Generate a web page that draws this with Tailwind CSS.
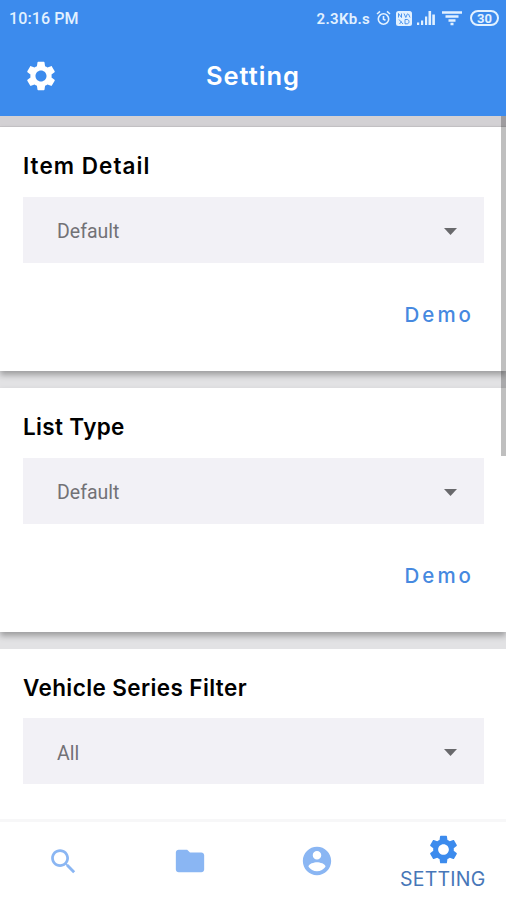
<!DOCTYPE html>
<html lang="en">
<head>
  <meta charset="UTF-8" />
  <title>Setting</title>
  <script src="https://cdn.jsdelivr.net/npm/@tailwindcss/browser@4"></script>
  <meta name="viewport" content="width=device-width, initial-scale=1.0" />
</head>
<body class="bg-white">

  <!-- icon shapes shared by the header and the tab bar -->
  <svg class="hidden">
    <symbol id="gear" viewBox="0 0 24 24">
      <path d="M19.43 12.98c.04-.32.07-.64.07-.98s-.03-.66-.07-.98l2.11-1.65c.19-.15.24-.42.12-.64l-2-3.46c-.12-.22-.39-.3-.61-.22l-2.49 1c-.52-.4-1.08-.73-1.69-.98l-.38-2.65C14.46 2.18 14.25 2 14 2h-4c-.25 0-.46.18-.49.42l-.38 2.65c-.61.25-1.17.59-1.69.98l-2.49-1c-.23-.09-.49 0-.61.22l-2 3.46c-.13.22-.07.49.12.64l2.11 1.65c-.04.32-.07.65-.07.98s.03.66.07.98l-2.11 1.65c-.19.15-.24.42-.12.64l2 3.46c.12.22.39.3.61.22l2.49-1c.52.4 1.08.73 1.69.98l.38 2.65c.03.24.24.42.49.42h4c.25 0 .46-.18.49-.42l.38-2.65c.61-.25 1.17-.59 1.69-.98l2.49 1c.23.09.49 0 .61-.22l2-3.46c.12-.22.07-.49-.12-.64l-2.11-1.65zM12 15.9c-2.150 0-3.900-1.750-3.900-3.900s1.750-3.900 3.900-3.900 3.900 1.750 3.900 3.900-1.750 3.900-3.900 3.900z" />
    </symbol>
  </svg>

  <div class="relative w-[506px] h-[900px] overflow-hidden flex flex-col font-['Inter',sans-serif]">

    <header class="h-[116px] shrink-0 bg-[#3c8bed] text-white">
      <div class="h-[38px] pl-[9px] pr-[7px] flex items-center justify-between font-['Roboto',sans-serif] font-medium text-[#e2f1ff]">
        <span class="text-[16px] tracking-[0.1px]">10:16 PM</span>
        <div class="flex items-center">
          <span class="text-[15px] font-semibold tracking-[0.3px] mr-[6px]">2.3Kb.s</span>
          <svg class="w-[15px] h-[16px] mr-[5px] -mt-[2px]" viewBox="0 0 15 16" fill="none" stroke="currentColor" stroke-width="1.6">
            <circle cx="7.5" cy="9" r="5.2" />
            <path d="M7.5 6v3.2l2 1M1 4l3-2.6M14 4l-3-2.6" />
          </svg>
          <svg class="w-[16px] h-[15px] mr-[5px] -mt-[1px]" viewBox="0 0 16 15">
            <rect width="16" height="15" rx="2.5" fill="currentColor" />
            <path d="M2.5 6.5v-4l3 4v-4M8 2.5l1.8 4 1.8-4M3 8.5l4 4.5M3.5 13l2-2.5M9 8.5v4.3h2.2c2.4 0 2.4-4.3 0-4.3zM12.5 3l1.5 3.5" fill="none" stroke="#3c8bed" stroke-width="0.9" />
          </svg>
          <svg class="w-[18px] h-[14px] mr-[7px] -mt-[3px]" viewBox="0 0 18 14" fill="currentColor">
            <path d="M0 11.500h2.200V14H0zM4 9.500h2.200V14H4zM8 5.500h2.200V14H8zM11.500 0h2.600v14h-2.600zM15.300 3.500h2.600V14h-2.600z" />
          </svg>
          <svg class="w-[20px] h-[15px] mr-[8px] -mt-[1px]" viewBox="0 0 20 15" fill="none" stroke="currentColor" stroke-width="2.400">
            <path d="M0 1.500h20M3.500 5.500h13M6.500 9.500h7M8.500 13h3" />
          </svg>
          <div class="w-[29px] h-[16px] -mt-[2px] rounded-full border-2 border-current flex items-center justify-center text-[13px] leading-none font-bold">30</div>
        </div>
      </div>

      <div class="h-[76px] grid grid-cols-3 items-center">
        <svg class="w-[34px] h-[34px] ml-[23.500px]" fill="currentColor"><use href="#gear" /></svg>
        <h1 class="text-center text-[25.500px] font-semibold tracking-[1px] whitespace-nowrap">Setting</h1>
      </div>
    </header>

    <main class="flex-1 min-h-0 overflow-hidden bg-[#e2e2e4] flex flex-col">
      <div class="h-[11px] shrink-0 bg-[#d3d1d4] border-b border-[#c6c4c7]"></div>

      <section class="relative h-[244px] mb-[17px] shrink-0 bg-white shadow-[0_4px_6px_rgba(0,0,0,0.3)] px-[23px] pt-[22px]">
        <h2 class="h-[32px] leading-[33px] text-[22.500px] font-semibold text-black tracking-[1.050px]">Item Detail</h2>
        <div class="mt-[16px] w-[461px] h-[66px] bg-[#f2f1f6] pl-[34px] pr-[27px] flex items-center justify-between">
          <span class="font-['Roboto',sans-serif] text-[19.500px] text-[#727276] pt-[4px]">Default</span>
          <svg class="w-[13px] h-[7px] mt-[2px]" viewBox="0 0 13 7" fill="#69696c"><path d="M0 0h13L6.500 7z" /></svg>
        </div>
        <div class="w-[451px] h-[105px] flex items-center justify-end text-[20.500px] font-medium tracking-[3px] text-[#4689e0]">Demo</div>
      </section>

      <section class="relative h-[244px] mb-[17px] shrink-0 bg-white shadow-[0_4px_6px_rgba(0,0,0,0.3)] px-[23px] pt-[22px]">
        <h2 class="h-[32px] leading-[33px] text-[22.500px] font-semibold text-black tracking-[0.350px]">List Type</h2>
        <div class="mt-[16px] w-[461px] h-[66px] bg-[#f2f1f6] pl-[34px] pr-[27px] flex items-center justify-between">
          <span class="font-['Roboto',sans-serif] text-[19.500px] text-[#727276] pt-[4px]">Default</span>
          <svg class="w-[13px] h-[7px] mt-[2px]" viewBox="0 0 13 7" fill="#69696c"><path d="M0 0h13L6.500 7z" /></svg>
        </div>
        <div class="w-[451px] h-[105px] flex items-center justify-end text-[20.500px] font-medium tracking-[3px] text-[#4689e0]">Demo</div>
      </section>

      <section class="relative h-[244px] shrink-0 bg-white px-[23px] pt-[22px]">
        <h2 class="h-[32px] leading-[33px] text-[22.500px] font-semibold text-black tracking-[0.400px]">Vehicle Series Filter</h2>
        <div class="mt-[15px] w-[461px] h-[66px] bg-[#f2f1f6] pl-[34px] pr-[27px] flex items-center justify-between">
          <span class="font-['Roboto',sans-serif] text-[19.500px] text-[#727276] pt-[5px]">All</span>
          <svg class="w-[13px] h-[7px] mt-[3px]" viewBox="0 0 13 7" fill="#69696c"><path d="M0 0h13L6.500 7z" /></svg>
        </div>
      </section>
    </main>

    <nav class="h-[81px] shrink-0 bg-white border-t-3 border-[#f7f7f8] grid grid-cols-4 justify-items-center items-center text-[#8ab6f3]">
      <svg class="w-[33px] h-[33px]" viewBox="0 0 24 24" fill="currentColor">
        <path d="M15.500 14h-.79l-.28-.27C15.410 12.590 16 11.110 16 9.500 16 5.910 13.090 3 9.500 3S3 5.910 3 9.500 5.910 16 9.500 16c1.610 0 3.090-.59 4.230-1.570l.27.28v.79l5 4.990L20.490 19l-4.990-5zm-6 0C7.010 14 5 11.990 5 9.500S7.010 5 9.500 5 14 7.010 14 9.500 11.990 14 9.500 14z" />
      </svg>
      <svg class="w-[34px] h-[34px]" viewBox="0 0 24 24" fill="currentColor">
        <path d="M10 4H4c-1.100 0-1.990.9-1.990 2L2 18c0 1.100.9 2 2 2h16c1.100 0 2-.9 2-2V8c0-1.100-.9-2-2-2h-8l-2-2z" />
      </svg>
      <svg class="w-[34px] h-[34px] ml-[1px]" viewBox="0 0 24 24" fill="currentColor">
        <path d="M12 2C6.480 2 2 6.480 2 12s4.480 10 10 10 10-4.480 10-10S17.520 2 12 2zm0 3c1.660 0 3 1.340 3 3s-1.340 3-3 3-3-1.340-3-3 1.340-3 3-3zm0 14.200c-2.500 0-4.710-1.280-6-3.220.03-1.990 4-3.080 6-3.080 1.990 0 5.970 1.090 6 3.080-1.290 1.940-3.500 3.220-6 3.220z" />
      </svg>
      <div class="flex flex-col items-center pt-[3px]">
        <svg class="w-[33px] h-[33px] ml-[1px] text-[#3c8bed]" fill="currentColor"><use href="#gear" /></svg>
        <span class="text-[19.500px] leading-[27px] tracking-[0.200px] text-[#4777b8]">SETTING</span>
      </div>
    </nav>

    <!-- scroll thumb, over the cards -->
    <div class="absolute right-0 top-[116px] w-[5px] h-[340px] bg-black/25"></div>
  </div>
</body>
</html>
